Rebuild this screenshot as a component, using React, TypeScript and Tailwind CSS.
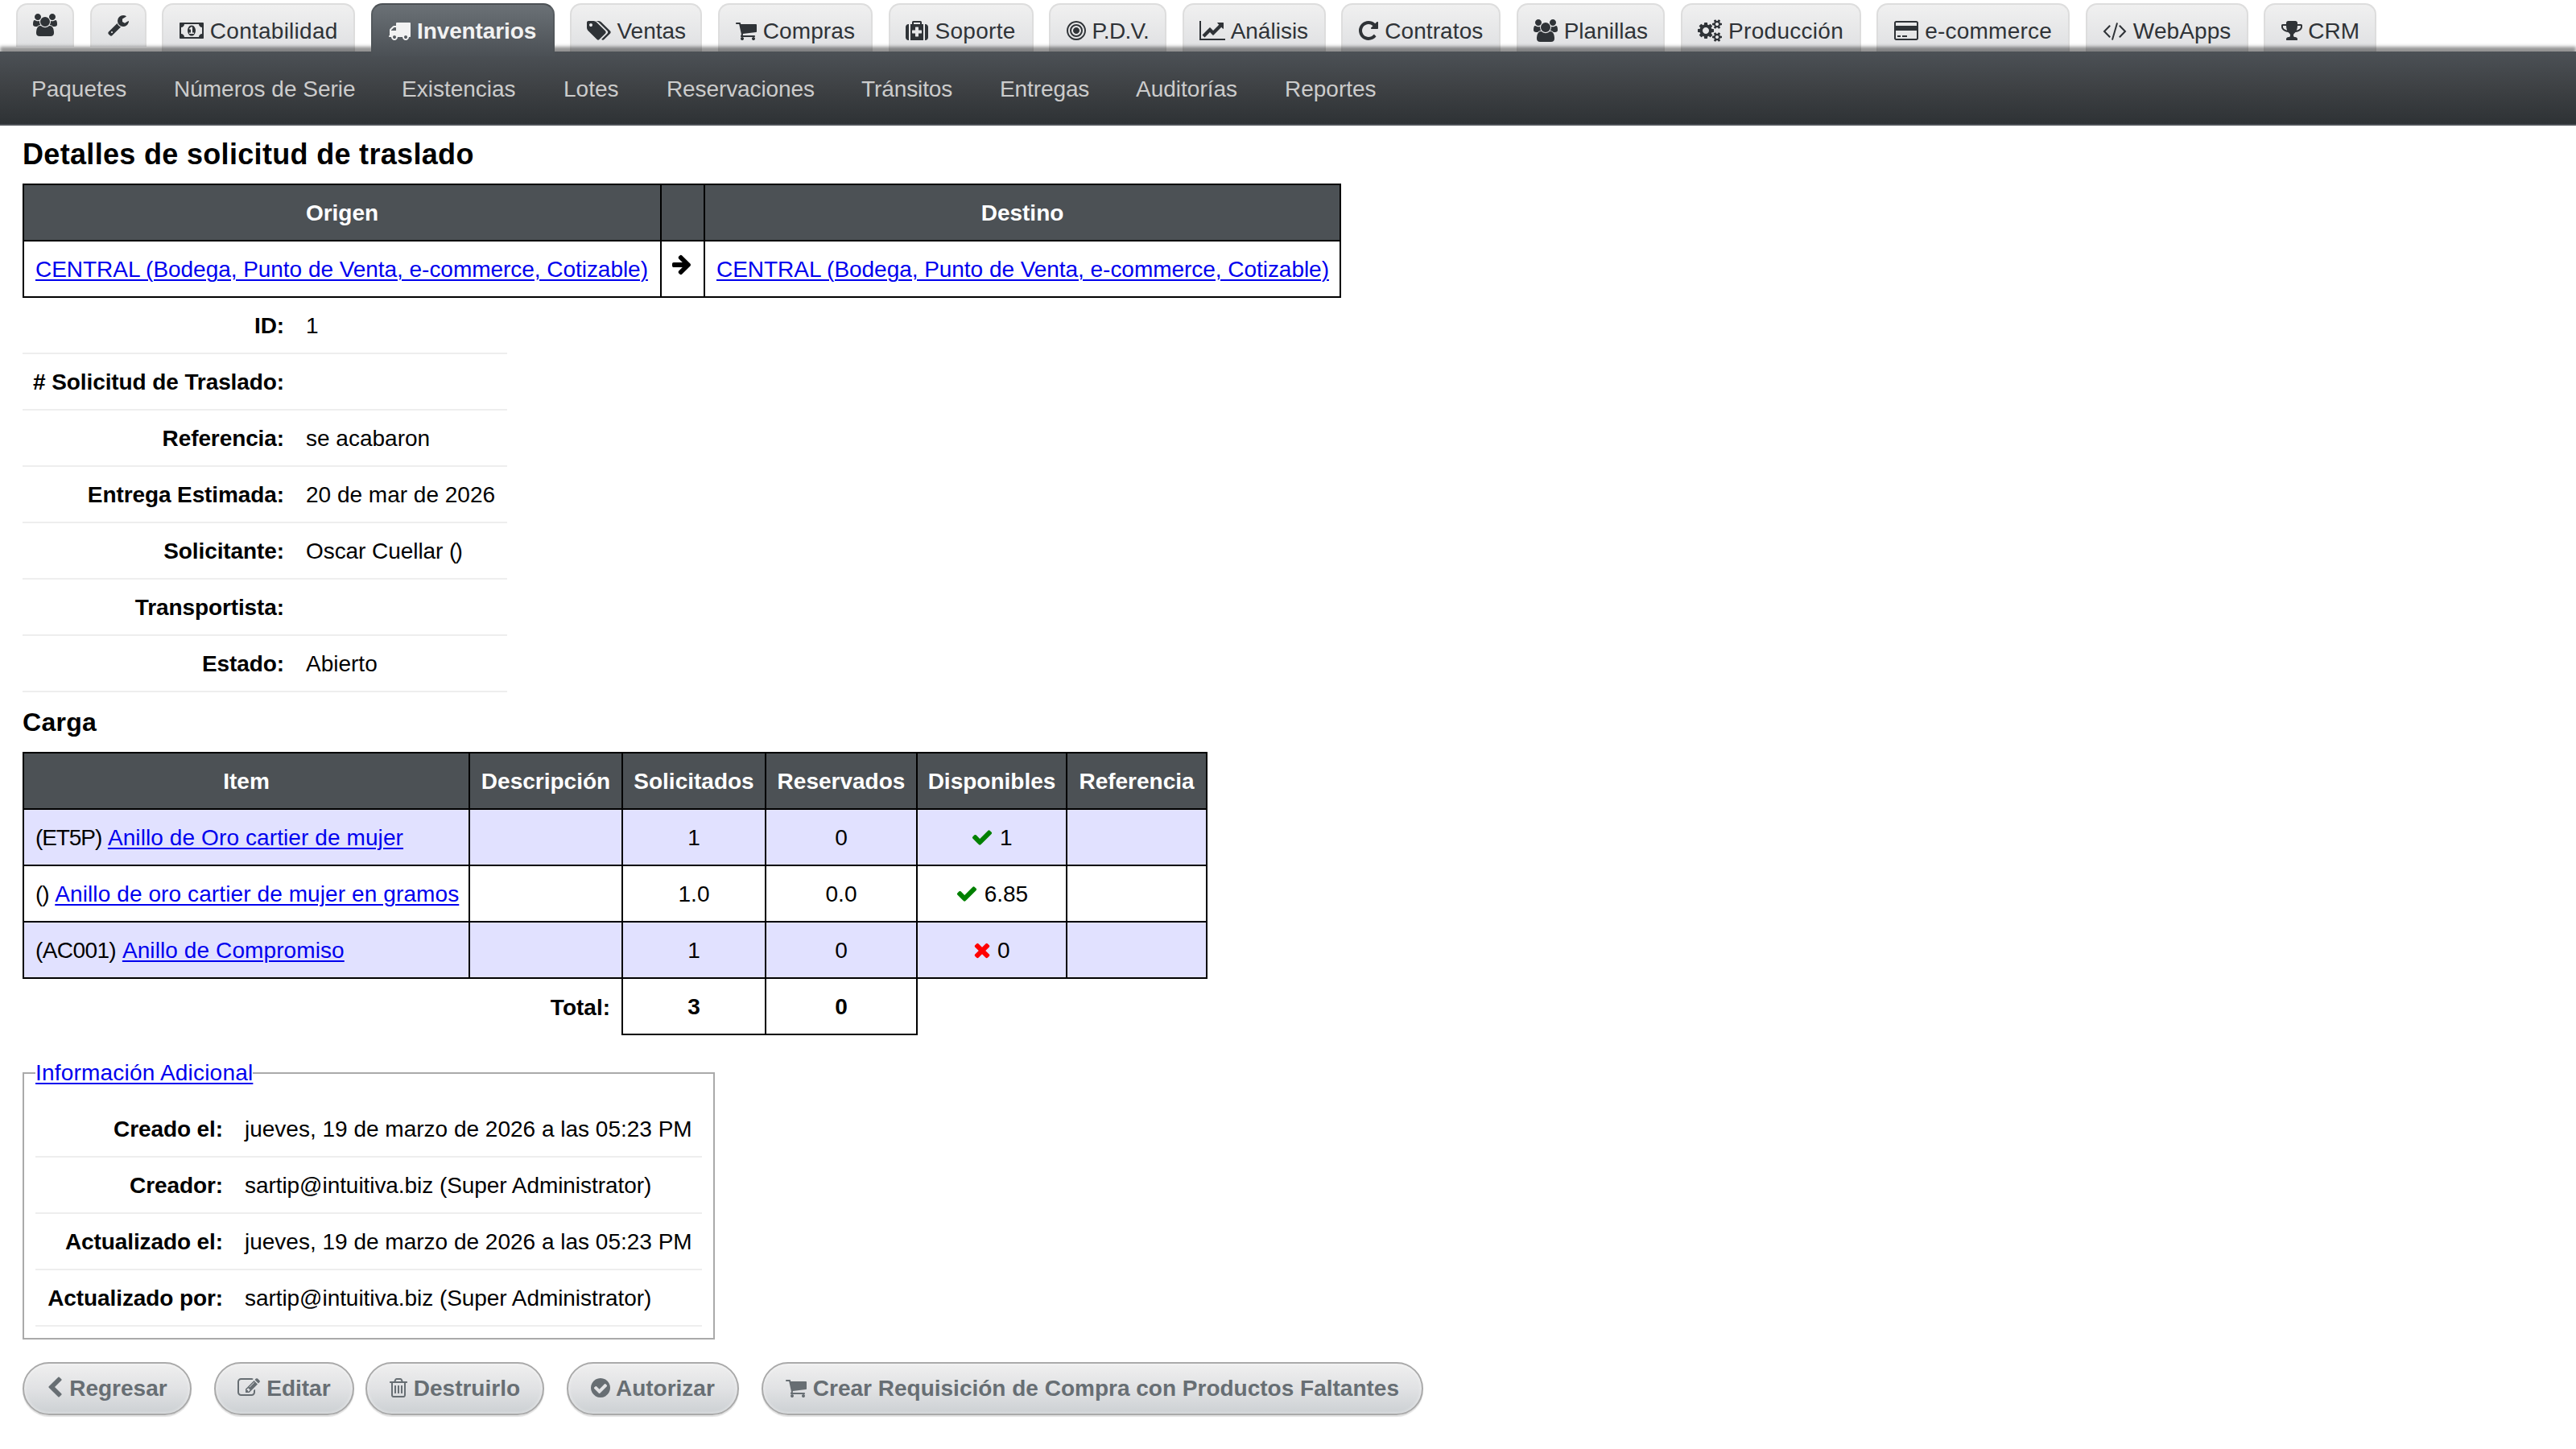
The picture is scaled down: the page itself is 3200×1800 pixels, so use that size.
import clsx from 'clsx';
import type { ReactNode } from 'react';

// Font Awesome 4 glyphs, 1792 units per em: [x offset, advance width, path]
const GLYPHS = {
  users: [-64, 1920, 'M529 896q-162 5-265 128h-134q-82 0-138-40.5t-56-118.5q0-353 124-353 6 0 43.5 21t97.5 42.5 119 21.5q67 0 133-23-5 37-5 66 0 139 81 256zm1071 637q0 120-73 189.5t-194 69.5h-874q-121 0-194-69.5t-73-189.5q0-53 3.5-103.5t14-109 26.5-108.5 43-97.5 62-81 85.5-53.5 111.5-20q10 0 43 21.5t73 48 107 48 135 21.5 135-21.5 107-48 73-48 43-21.5q61 0 111.5 20t85.5 53.5 62 81 43 97.5 26.5 108.5 14 109 3.5 103.5zm-1024-1277q0 106-75 181t-181 75-181-75-75-181 75-181 181-75 181 75 75 181zm704 384q0 159-112.5 271.5t-271.5 112.5-271.5-112.5-112.5-271.5 112.5-271.5 271.5-112.5 271.5 112.5 112.5 271.5zm576 225q0 78-56 118.5t-138 40.5h-134q-103-123-265-128 81-117 81-256 0-29-5-66 66 23 133 23 59 0 119-21.5t97.5-42.5 43.5-21q124 0 124 353zm-128-609q0 106-75 181t-181 75-181-75-75-181 75-181 181-75 181 75 75 181z'],
  wrench: [64, 1664, 'M448 1472q0-26-19-45t-45-19-45 19-19 45 19 45 45 19 45-19 19-45zm644-420l-682 682q-37 37-90 37-52 0-91-37l-106-108q-38-36-38-90 0-53 38-91l681-681q39 98 114.5 173.5t173.5 114.5zm634-435q0 39-23 106-47 134-164.5 217.5t-258.5 83.5q-185 0-316.5-131.5t-131.5-316.5 131.5-316.5 316.5-131.5q58 0 121.5 16.5t107.5 46.5q16 11 16 28t-16 28l-293 169v224l193 107q5-3 79-48.5t135.5-81 70.5-35.5q15 0 23.5 10t8.5 25z'],
  money: [0, 1920, 'M768 1152h384v-96h-128v-448h-114l-148 137 77 80q42-37 55-57h2v288h-128v96zm512-256q0 70-21 142t-59.5 134-101.5 101-138 39-138-39-101.5-101-59.5-134-21-142 21-142 59.5-134 101.5-101 138-39 138 39 101.5 101 59.5 134 21 142zm512 256v-512q-106 0-181-75t-75-181h-1152q0 106-75 181t-181 75v512q106 0 181 75t75 181h1152q0-106 75-181t181-75zm128-832v1152q0 26-19 45t-45 19h-1792q-26 0-45-19t-19-45v-1152q0-26 19-45t45-19h1792q26 0 45 19t19 45z'],
  truck: [64, 1728, 'M640 1408q0-52-38-90t-90-38-90 38-38 90 38 90 90 38 90-38 38-90zm-384-512h384v-256h-158q-13 0-22 9l-195 195q-9 9-9 22v30zm1280 512q0-52-38-90t-90-38-90 38-38 90 38 90 90 38 90-38 38-90zm256-1088v1024q0 15-4 26.5t-13.5 18.5-16.5 11.5-23.5 6-22.5 2-25.5 0-22.5-.5q0 106-75 181t-181 75-181-75-75-181h-384q0 106-75 181t-181 75-181-75-75-181h-64q-3 0-22.5.5t-25.5 0-22.5-2-23.5-6-16.5-11.5-13.5-18.5-4-26.5q0-26 19-45t45-19v-320q0-8-.5-35t0-38 2.5-34.5 6.5-37 14-30.5 22.5-30l198-198q19-19 50.5-32t58.5-13h160v-192q0-26 19-45t45-19h1024q26 0 45 19t19 45z'],
  tags: [0, 1920, 'M448 448q0-53-37.5-90.5t-90.5-37.5-90.5 37.5-37.5 90.5 37.5 90.5 90.5 37.5 90.5-37.5 37.5-90.5zm1067 576q0 53-37 90l-491 492q-39 37-91 37-53 0-90-37l-715-716q-38-37-64.5-101t-26.5-117v-416q0-52 38-90t90-38h416q53 0 117 26.5t102 64.5l715 714q37 39 37 91zm384 0q0 53-37 90l-491 492q-39 37-91 37-36 0-59-14t-53-45l470-470q37-37 37-90 0-52-37-91l-715-714q-38-38-102-64.5t-117-26.5h224q53 0 117 26.5t102 64.5l715 714q37 39 37 91z'],
  cart: [64, 1664, 'M704 1536q0 52-38 90t-90 38-90-38-38-90 38-90 90-38 90 38 38 90zm896 0q0 52-38 90t-90 38-90-38-38-90 38-90 90-38 90 38 38 90zm128-1088v512q0 24-16.5 42.5t-40.5 21.5l-1044 122q13 60 13 70 0 16-24 64h920q26 0 45 19t19 45-19 45-45 19h-1024q-26 0-45-19t-19-45q0-11 8-31.5t16-36 21.5-40 15.5-29.5l-177-823h-204q-26 0-45-19t-19-45 19-45 45-19h256q16 0 28.5 6.5t19.5 15.5 13 24.5 8 26 5.5 29.5 4.5 26h1201q26 0 45 19t19 45z'],
  medkit: [0, 1792, 'M1280 1088v-192q0-14-9-23t-23-9h-224v-224q0-14-9-23t-23-9h-192q-14 0-23 9t-9 23v224h-224q-14 0-23 9t-9 23v192q0 14 9 23t23 9h224v224q0 14 9 23t23 9h192q14 0 23-9t9-23v-224h224q14 0 23-9t9-23zm-640-704h512v-128h-512v128zm-384 0v1280h-32q-92 0-158-66t-66-158v-832q0-92 66-158t158-66h32zm1152 0v1280h-1024v-1280h128v-160q0-40 28-68t68-28h576q40 0 68 28t28 68v160h128zm384 224v832q0 92-66 158t-158 66h-32v-1280h32q92 0 158 66t66 158z'],
  bullseye: [128, 1536, 'M1152 896q0 106-75 181t-181 75-181-75-75-181 75-181 181-75 181 75 75 181zm128 0q0-159-112.5-271.5t-271.5-112.5-271.5 112.5-112.5 271.5 112.5 271.5 271.5 112.5 271.5-112.5 112.5-271.5zm128 0q0 212-150 362t-362 150-362-150-150-362 150-362 362-150 362 150 150 362zm128 0q0-130-51-248.5t-136.5-204-204-136.5-248.5-51-248.5 51-204 136.5-136.5 204-51 248.5 51 248.5 136.5 204 204 136.5 248.5 51 248.5-51 204-136.5 136.5-204 51-248.5zm128 0q0 209-103 385.5t-279.5 279.5-385.5 103-385.5-103-279.5-279.5-103-385.5 103-385.5 279.5-279.5 385.5-103 385.5 103 279.5 279.5 103 385.5z'],
  lineChart: [0, 2048, 'M2048 1536v128h-2048v-1536h128v1408h1920zm-128-1248v435q0 21-19.5 29.5t-35.5-7.5l-121-121-633 633q-10 10-23 10t-23-10l-233-233-416 416-192-192 585-585q10-10 23-10t23 10l233 233 464-464-121-121q-16-16-7.5-35.5t29.5-19.5h435q14 0 23 9t9 23z'],
  repeat: [128, 1536, 'M1664 256v448q0 26-19 45t-45 19h-448q-42 0-59-40-17-39 14-69l138-138q-148-137-349-137-104 0-198.5 40.5t-163.5 109.5-109.5 163.5-40.5 198.5 40.5 198.5 109.5 163.5 163.5 109.5 198.5 40.5q119 0 225-52t179-147q7-10 23-12 15 0 25 9l137 138q9 8 9.5 20.5t-7.5 22.5q-109 132-264 204.5t-327 72.5q-156 0-298-61t-245-164-164-245-61-298 61-298 164-245 245-164 298-61q147 0 284.5 55.5t244.5 156.5l130-129q29-31 70-14 39 17 39 59z'],
  cogs: [0, 1920, 'M896 896q0-106-75-181t-181-75-181 75-75 181 75 181 181 75 181-75 75-181zm768 512q0-52-38-90t-90-38-90 38-38 90q0 53 37.5 90.5t90.5 37.5 90.5-37.5 37.5-90.5zm0-1024q0-52-38-90t-90-38-90 38-38 90q0 53 37.5 90.5t90.5 37.5 90.5-37.5 37.5-90.5zm-384 421v185q0 10-7 19.5t-16 10.5l-155 24q-11 35-32 76 34 48 90 115 7 11 7 20 0 12-7 19-23 30-82.5 89.5t-78.5 59.5q-11 0-21-7l-115-90q-37 19-77 31-11 108-23 155-7 24-30 24h-186q-11 0-20-7.5t-10-17.5l-23-153q-34-10-75-31l-118 89q-7 7-20 7-11 0-21-8-144-133-144-160 0-9 7-19 10-14 41-53t47-61q-23-44-35-82l-152-24q-10-1-17-9.5t-7-19.5v-185q0-10 7-19.5t16-10.5l155-24q11-35 32-76-34-48-90-115-7-11-7-20 0-12 7-20 22-30 82-89t79-59q11 0 21 7l115 90q34-18 77-32 11-108 23-154 7-24 30-24h186q11 0 20 7.5t10 17.5l23 153q34 10 75 31l118-89q8-7 20-7 11 0 21 8 144 133 144 160 0 8-7 19-12 16-42 54t-45 60q23 48 34 82l152 23q10 2 17 10.5t7 19.5zm640 533v140q0 16-149 31-12 27-30 52 51 113 51 138 0 4-4 7-122 71-124 71-8 0-46-47t-52-68q-20 2-30 2t-30-2q-14 21-52 68t-46 47q-2 0-124-71-4-3-4-7 0-25 51-138-18-25-30-52-149-15-149-31v-140q0-16 149-31 13-29 30-52-51-113-51-138 0-4 4-7 4-2 35-20t59-34 30-16q8 0 46 46.5t52 67.5q20-2 30-2t30 2q51-71 92-112l6-2q4 0 124 70 4 3 4 7 0 25-51 138 17 23 30 52 149 15 149 31zm0-1024v140q0 16-149 31-12 27-30 52 51 113 51 138 0 4-4 7-122 71-124 71-8 0-46-47t-52-68q-20 2-30 2t-30-2q-14 21-52 68t-46 47q-2 0-124-71-4-3-4-7 0-25 51-138-18-25-30-52-149-15-149-31v-140q0-16 149-31 13-29 30-52-51-113-51-138 0-4 4-7 4-2 35-20t59-34 30-16q8 0 46 46.5t52 67.5q20-2 30-2t30 2q51-71 92-112l6-2q4 0 124 70 4 3 4 7 0 25-51 138 17 23 30 52 149 15 149 31z'],
  creditCard: [0, 1920, 'M1760 128q66 0 113 47t47 113v1216q0 66-47 113t-113 47h-1600q-66 0-113-47t-47-113v-1216q0-66 47-113t113-47h1600zm-1600 128q-13 0-22.5 9.5t-9.5 22.5v224h1664v-224q0-13-9.5-22.5t-22.5-9.5h-1600zm1600 1280q13 0 22.5-9.5t9.5-22.5v-608h-1664v608q0 13 9.5 22.5t22.5 9.5h1600zm-1504-128v-128h256v128h-256zm384 0v-128h384v128h-384z'],
  code: [0, 1920, 'M617 1399l-50 50q-10 10-23 10t-23-10l-466-466q-10-10-10-23t10-23l466-466q10-10 23-10t23 10l50 50q10 10 10 23t-10 23l-393 393 393 393q10 10 10 23t-10 23zm591-1067l-373 1291q-4 13-15.5 19.5t-23.5 2.5l-62-17q-13-4-19.5-15.5t-2.5-24.5l373-1291q4-13 15.5-19.5t23.5-2.5l62 17q13 4 19.5 15.5t2.5 24.5zm657 651l-466 466q-10 10-23 10t-23-10l-50-50q-10-10-10-23t10-23l393-393-393-393q-10-10-10-23t10-23l50-50q10-10 23-10t23 10l466 466q10 10 10 23t-10 23z'],
  trophy: [64, 1664, 'M522 883q-74-162-74-371h-256v96q0 78 94.5 162t235.5 113zm1078-275v-96h-256q0 209-74 371 141-29 235.5-113t94.5-162zm128-128v128q0 71-41.5 143t-112 130-173 97.5-215.5 44.5q-42 54-95 95-38 34-52.5 72.5t-14.5 89.5q0 54 30.5 91t97.5 37q75 0 133.5 45.5t58.5 114.5v64q0 14-9 23t-23 9h-832q-14 0-23-9t-9-23v-64q0-69 58.5-114.5t133.5-45.5q67 0 97.5-37t30.5-91q0-51-14.5-89.5t-52.5-72.5q-53-41-95-95-113-5-215.5-44.5t-173-97.5-112-130-41.5-143v-128q0-40 28-68t68-28h288v-96q0-66 47-113t113-47h576q66 0 113 47t47 113v96h288q40 0 68 28t28 68z'],
  arrowRight: [192, 1536, 'M1728 960q0 54-37 91l-651 651q-39 37-91 37-51 0-90-37l-75-75q-38-38-38-91t38-91l293-293h-704q-52 0-84.5-37.5t-32.5-90.5v-128q0-53 32.5-90.5t84.5-37.5h704l-293-294q-38-36-38-90t38-90l75-75q38-38 90-38 53 0 91 38l651 651q37 35 37 90z'],
  check: [0, 1792, 'M1671 566q0 40-28 68l-724 724-136 136q-28 28-68 28t-68-28l-136-136-362-362q-28-28-28-68t28-68l136-136q28-28 68-28t68 28l294 295 656-657q28-28 68-28t68 28l136 136q28 28 28 68z'],
  times: [192, 1408, 'M1490 1322q0 40-28 68l-136 136q-28 28-68 28t-68-28l-294-294-294 294q-28 28-68 28t-68-28l-136-136q-28-28-28-68t28-68l294-294-294-294q-28-28-28-68t28-68l136-136q28-28 68-28t68 28l294 294 294-294q28-28 68-28t68 28l136 136q28 28 28 68t-28 68l-294 294 294 294q28 28 28 68z'],
  chevronLeft: [256, 1280, 'M1427 301l-531 531 531 531q19 19 19 45t-19 45l-166 166q-19 19-45 19t-45-19l-742-742q-19-19-19-45t19-45l742-742q19-19 45-19t45 19l166 166q19 19 19 45t-19 45z'],
  edit: [0, 1792, 'M888 1184l116-116-152-152-116 116v56h96v96h56zm440-720q-16-16-33 1l-350 350q-17 17-1 33t33-1l350-350q17-17 1-33zm80 594v190q0 119-84.5 203.5t-203.5 84.5h-832q-119 0-203.5-84.5t-84.5-203.5v-832q0-119 84.5-203.5t203.5-84.5h832q63 0 117 25 15 7 18 23 3 17-9 29l-49 49q-14 14-32 8-23-6-45-6h-832q-66 0-113 47t-47 113v832q0 66 47 113t113 47h832q66 0 113-47t47-113v-126q0-13 9-22l64-64q15-15 35-7t20 29zm-96-738l288 288-672 672h-288v-288zm444 132l-92 92-288-288 92-92q28-28 68-28t68 28l152 152q28 28 28 68t-28 68z'],
  trash: [192, 1408, 'M704 736v576q0 14-9 23t-23 9h-64q-14 0-23-9t-9-23v-576q0-14 9-23t23-9h64q14 0 23 9t9 23zm256 0v576q0 14-9 23t-23 9h-64q-14 0-23-9t-9-23v-576q0-14 9-23t23-9h64q14 0 23 9t9 23zm256 0v576q0 14-9 23t-23 9h-64q-14 0-23-9t-9-23v-576q0-14 9-23t23-9h64q14 0 23 9t9 23zm128 724v-948h-896v948q0 22 7 40.5t14.5 27 10.5 8.5h832q3 0 10.5-8.5t14.5-27 7-40.5zm-672-1076h448l-48-117q-7-9-17-11h-317q-10 2-17 11zm928 32v64q0 14-9 23t-23 9h-96v948q0 83-47 143.5t-113 60.5h-832q-66 0-113-58.5t-47-141.5v-952h-96q-14 0-23-9t-9-23v-64q0-14 9-23t23-9h309l70-167q15-37 54-63t79-26h320q40 0 79 26t54 63l70 167h309q14 0 23 9t9 23z'],
  checkCircle: [128, 1536, 'M1412 734q0-28-18-46l-91-90q-19-19-45-19t-45 19l-408 407-226-226q-19-19-45-19t-45 19l-91 90q-18 18-18 46 0 27 18 45l362 362q19 19 45 19 27 0 46-19l543-543q18-18 18-45zm252 162q0 209-103 385.5t-279.5 279.5-385.5 103-385.5-103-279.5-279.5-103-385.5 103-385.5 279.5-279.5 385.5-103 385.5 103 279.5 279.5 103 385.5z'],
} as const;

type IconName = keyof typeof GLYPHS;

function Icon({ name, className }: { name: IconName; className?: string }) {
  const [x, width, d] = GLYPHS[name];
  return (
    <svg
      viewBox={`${x} 0 ${width} 1792`}
      width={(width * 28) / 1792}
      height={28}
      fill="currentColor"
      className={clsx('inline-block overflow-visible align-[-4px]', className)}
    >
      <path d={d} />
    </svg>
  );
}

const TABS: { icon: IconName; label?: string; width: string; active?: boolean }[] = [
  { icon: 'users', width: 'w-[72px]' },
  { icon: 'wrench', width: 'w-[70px]' },
  { icon: 'money', label: 'Contabilidad', width: 'w-[240px] tracking-[0.25px]' },
  { icon: 'truck', label: 'Inventarios', width: 'w-[228px] tracking-[-0.1px]', active: true },
  { icon: 'tags', label: 'Ventas', width: 'w-[164px]' },
  { icon: 'cart', label: 'Compras', width: 'w-[192px] tracking-[0.1px]' },
  { icon: 'medkit', label: 'Soporte', width: 'w-[180px] tracking-[0.3px]' },
  { icon: 'bullseye', label: 'P.D.V.', width: 'w-[146px] tracking-[-0.7px]' },
  { icon: 'lineChart', label: 'Análisis', width: 'w-[178px]' },
  { icon: 'repeat', label: 'Contratos', width: 'w-[198px] tracking-[0.1px]' },
  { icon: 'users', label: 'Planillas', width: 'w-[184px]' },
  { icon: 'cogs', label: 'Producción', width: 'w-[224px] tracking-[0.3px]' },
  { icon: 'creditCard', label: 'e-commerce', width: 'w-[240px] tracking-[0.2px]' },
  { icon: 'code', label: 'WebApps', width: 'w-[202px] tracking-[0.1px]' },
  { icon: 'trophy', label: 'CRM', width: 'w-[140px]' },
];

const SUBNAV = [
  { label: 'Paquetes', width: 'w-[177px]' },
  { label: 'Números de Serie', width: 'w-[283px]' },
  { label: 'Existencias', width: 'w-[201px]' },
  { label: 'Lotes', width: 'w-[128px]' },
  { label: 'Reservaciones', width: 'w-[242px] tracking-[-0.1px]' },
  { label: 'Tránsitos', width: 'w-[172px] tracking-[-0.1px]' },
  { label: 'Entregas', width: 'w-[169px] tracking-[-0.1px]' },
  { label: 'Auditorías', width: 'w-[185px]' },
  { label: 'Reportes', width: 'w-[174px]' },
];

const DETAILS: [string, string][] = [
  ['ID:', '1'],
  ['# Solicitud de Traslado:', ''],
  ['Referencia:', 'se acabaron'],
  ['Entrega Estimada:', '20 de mar de 2026'],
  ['Solicitante:', 'Oscar Cuellar ()'],
  ['Transportista:', ''],
  ['Estado:', 'Abierto'],
];

const AUDIT: [string, string][] = [
  ['Creado el:', 'jueves, 19 de marzo de 2026 a las 05:23 PM'],
  ['Creador:', 'sartip@intuitiva.biz (Super Administrator)'],
  ['Actualizado el:', 'jueves, 19 de marzo de 2026 a las 05:23 PM'],
  ['Actualizado por:', 'sartip@intuitiva.biz (Super Administrator)'],
];

const ITEMS = [
  { code: 'ET5P', name: 'Anillo de Oro cartier de mujer', requested: '1', reserved: '0', available: '1', ok: true },
  { code: '', name: 'Anillo de oro cartier de mujer en gramos', requested: '1.0', reserved: '0.0', available: '6.85', ok: true },
  { code: 'AC001', name: 'Anillo de Compromiso', requested: '1', reserved: '0', available: '0', ok: false },
];

const LOCATION = 'CENTRAL (Bodega, Punto de Venta, e-commerce, Cotizable)';

function TextLink({ children, className }: { children: ReactNode; className?: string }) {
  return (
    <a href="#" className={clsx('text-[#0000ee] underline decoration-2 underline-offset-[3px]', className)}>
      {children}
    </a>
  );
}

function Th({ children }: { children?: ReactNode }) {
  return (
    <th className="border-2 border-black bg-[#4c5155] p-0 pt-[2px] text-center font-bold text-white">{children}</th>
  );
}

function Td({ children, className }: { children?: ReactNode; className?: string }) {
  return <td className={clsx('border-2 border-black px-[14px] pt-[2px] pb-0', className)}>{children}</td>;
}

function FieldTable({ rows, labelWidth, valueWidth }: { rows: [string, string][]; labelWidth: string; valueWidth: string }) {
  return (
    <table className="table-fixed border-separate border-spacing-0 whitespace-nowrap">
      <tbody>
        {rows.map(([label, value]) => (
          <tr key={label} className="h-[70px]">
            <th
              className={clsx(
                'border-b-2 border-[#eeeeee] p-0 pt-[2px] pr-[13px] text-right font-bold tracking-[-0.1px]',
                labelWidth,
              )}
            >
              {label}
            </th>
            <td
              className={clsx(
                'border-b-2 border-[#eeeeee] p-0 pt-[2px] pl-[14px]',
                value.endsWith(')') && 'tracking-[-0.06px]',
                valueWidth,
              )}
            >
              {value.endsWith('()') ? (
                <>
                  {value.slice(0, -2)}
                  <span className="tracking-[-2px]">()</span>
                </>
              ) : (
                value
              )}
            </td>
          </tr>
        ))}
      </tbody>
    </table>
  );
}

function Button({ icon, width, children }: { icon: IconName; width: string; children: ReactNode }) {
  return (
    <a
      href="#"
      className={clsx(
        'flex h-[66px] items-center justify-center rounded-full border-2 border-[#aaaaaa] bg-linear-to-b from-[#efefef] via-[#e1e2e4] to-[#ccd0d3] font-bold text-[#676e73] shadow-[0_2px_1px_rgba(0,0,0,0.12),inset_0_0_4px_rgba(255,255,255,0.6)]',
        width,
      )}
    >
      <span>
        <Icon name={icon} /> {children}
      </span>
    </a>
  );
}

export default function App() {
  return (
    <div className="min-h-[1800px] w-[3200px] overflow-hidden bg-white font-['Liberation_Sans',Arial,sans-serif] text-[28px] leading-[32px] whitespace-nowrap text-black">
      {/* Module tabs */}
      <nav className="flex h-[64px] items-start gap-[19.6px] pt-1 pl-[20px]">
        {TABS.map(({ icon, label, width, active }, i) => (
          <a
            key={i}
            href="#"
            className={clsx(
              'flex shrink-0 justify-center rounded-t-[14px] border-2 border-b-0',
              label ? 'pt-[17px]' : 'h-[54px] pt-[10px]',
              active
                ? 'relative z-10 h-[66px] border-[#4c5155] border-x-[#4c5155]/60 bg-linear-to-b from-[#6b7176] to-[#4b5055] font-bold text-[#f2f2f2]'
                : 'border-[#dddddd] bg-linear-to-b from-[#f0f0f0] to-[#dfe0e2] text-[#2f3337]',
              label && !active && 'h-[60px]',
              width,
            )}
          >
            <span>
              <Icon name={icon} />
              {label && <> {label}</>}
            </span>
          </a>
        ))}
      </nav>

      {/* Section bar */}
      <nav className="relative flex h-[92px] items-center border-b-2 border-[#4d5156] bg-linear-to-b from-[#4c5156] via-[#3e4144] to-[#2e3235] pt-[3px] pl-[39px] text-[#cccccc] shadow-[0_-6px_4px_rgba(0,0,0,0.42)]">
        {SUBNAV.map(({ label, width }) => (
          <a key={label} href="#" className={width}>
            {label}
          </a>
        ))}
      </nav>

      <main className="px-7">
        <h1 className="mt-[15px] mb-[15px] text-[36px] leading-[42px] font-bold tracking-[0.32px]">
          Detalles de solicitud de traslado
        </h1>

        {/* Origin and destination */}
        <table className="w-[1638px] table-fixed border-collapse">
          <colgroup>
            <col className="w-[792px]" />
            <col className="w-[54px]" />
            <col className="w-[790px]" />
          </colgroup>
          <thead>
            <tr className="h-[70px]">
              <Th>Origen</Th>
              <Th />
              <Th>Destino</Th>
            </tr>
          </thead>
          <tbody>
            <tr className="h-[70px]">
              <Td className="tracking-[-0.04px]">
                <TextLink>{LOCATION}</TextLink>
              </Td>
              <Td>
                <Icon name="arrowRight" className="mb-[14px] -ml-[2px] align-middle" />
              </Td>
              <Td className="tracking-[-0.04px]">
                <TextLink>{LOCATION}</TextLink>
              </Td>
            </tr>
          </tbody>
        </table>

        <FieldTable rows={DETAILS} labelWidth="w-[338px]" valueWidth="w-[264px]" />

        {/* Cargo */}
        <h2 className="mt-[18px] mb-[18px] text-[32px] leading-[38px] font-bold tracking-[0.3px]">Carga</h2>
        <table className="w-[1472px] table-fixed border-collapse">
          <colgroup>
            <col className="w-[554px]" />
            <col className="w-[190px]" />
            <col className="w-[178px]" />
            <col className="w-[188px]" />
            <col className="w-[186px]" />
            <col className="w-[174px]" />
          </colgroup>
          <thead>
            <tr className="h-[70px]">
              <Th>Item</Th>
              <Th>Descripción</Th>
              <Th>Solicitados</Th>
              <Th>Reservados</Th>
              <Th>Disponibles</Th>
              <Th>Referencia</Th>
            </tr>
          </thead>
          <tbody>
            {ITEMS.map((item) => (
              <tr key={item.name} className="h-[70px] odd:bg-[#e1e1ff]">
                <Td>
                  <span className={item.code === 'AC001' ? 'tracking-[-0.6px]' : 'tracking-[-1.1px]'}>({item.code})</span>{' '}
                  <TextLink className="tracking-[0.1px]">{item.name}</TextLink>
                </Td>
                <Td />
                <Td className="text-center">{item.requested}</Td>
                <Td className="text-center">{item.reserved}</Td>
                <Td className="text-center">
                  <Icon name={item.ok ? 'check' : 'times'} className={item.ok ? 'text-[#008000]' : 'text-[#ff0000]'} />{' '}
                  {item.available}
                </Td>
                <Td />
              </tr>
            ))}
            <tr className="h-[70px] font-bold">
              <td colSpan={2} className="p-0 pt-[2px] pr-[14px] text-right">
                Total:
              </td>
              <Td className="text-center">3</Td>
              <Td className="text-center">0</Td>
              <td colSpan={2} />
            </tr>
          </tbody>
        </table>

        {/* Additional information */}
        <fieldset className="mt-[30px] w-[860px] border-2 border-[#aaaaaa] px-[14px] pt-[18px] pb-[14px]">
          <legend className="leading-[34px]">
            <TextLink className="tracking-[0.2px]">Información Adicional</TextLink>
          </legend>
          <FieldTable rows={AUDIT} labelWidth="w-[246px]" valueWidth="w-[582px]" />
        </fieldset>

        {/* Actions */}
        <div className="mt-7 flex gap-7">
          <Button icon="chevronLeft" width="w-[210px]">Regresar</Button>
          <div className="flex gap-[14px]">
            <Button icon="edit" width="w-[174px]">Editar</Button>
            <Button icon="trash" width="w-[222px]">Destruirlo</Button>
          </div>
          <Button icon="checkCircle" width="w-[214px]">Autorizar</Button>
          <Button icon="cart" width="w-[822px]">Crear Requisición de Compra con Productos Faltantes</Button>
        </div>
      </main>
    </div>
  );
}
